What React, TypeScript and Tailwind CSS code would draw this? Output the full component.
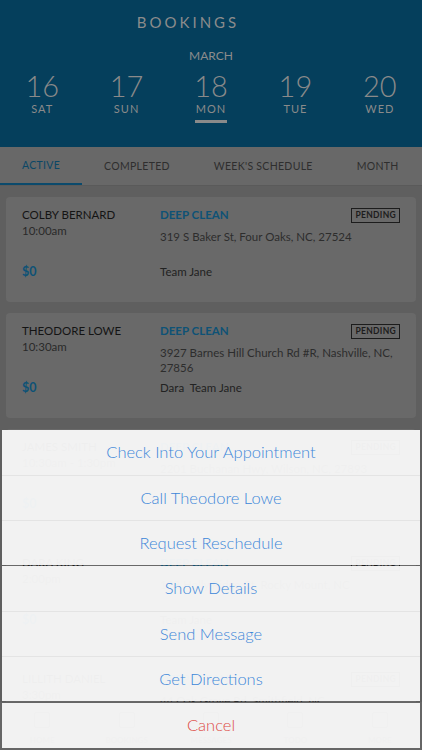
import React from "react";

type Booking = {
  name: string;
  time: string;
  address: string;
  team: string;
};

const days = [
  { num: "16", label: "SAT" },
  { num: "17", label: "SUN" },
  { num: "18", label: "MON", active: true },
  { num: "19", label: "TUE" },
  { num: "20", label: "WED" },
];

const tabs = ["ACTIVE", "COMPLETED", "WEEK'S SCHEDULE", "MONTH"];

const bookings: Booking[] = [
  { name: "COLBY BERNARD", time: "10:00am", address: "319 S Baker St, Four Oaks, NC, 27524", team: "Team Jane" },
  { name: "THEODORE LOWE", time: "10:30am", address: "3927 Barnes Hill Church Rd #R, Nashville, NC, 27856", team: "Dara  Team Jane" },
  { name: "JAMES SMITH", time: "10:30am - 1:30pm", address: "2201 Buchanan Hwy, Wilson, NC, 27893", team: "" },
  { name: "DARA KING", time: "2:00pm", address: "108 Holly Ridge Ct, Rocky Mount, NC", team: "Team Jane" },
  { name: "LILLITH DANIEL", time: "3:30pm", address: "44 Oak Grove Rd, Smithfield, NC", team: "" },
];

const nav = ["HOME", "BOOKINGS", "MESSAGES", "TODO", "MORE"];

function BookingCard({ b }: { b: Booking }) {
  return (
    <div className="rounded-[4px] bg-[#696969] pl-[16px] pr-[16px] pt-[10px] pb-[23px]">
      <div className="flex">
        <div className="w-[138px] shrink-0">
          <div className="text-[11.5px] leading-[16px] text-[#141414]">{b.name}</div>
          <div className="text-[11.5px] leading-[16px] text-[#2a2a2a]">{b.time}</div>
        </div>
        <div className="flex-1">
          <div className="flex h-[16px] items-center justify-between">
            <span className="text-[11.5px] font-bold text-[#0e5276]">DEEP CLEAN</span>
            <span className="border border-[#1c1c1c] px-[3px] text-[8.5px] font-bold leading-[13px] tracking-[0.3px] text-[#1c1c1c]">
              PENDING
            </span>
          </div>
          <div className="mt-[6px] min-h-[30px] text-[11.5px] leading-[15px] text-[#2d2d2d]">{b.address}</div>
        </div>
      </div>
      <div className="mt-[5px] flex items-center">
        <div className="w-[138px] shrink-0 text-[12.5px] font-bold leading-[15px] text-[#0e5276]">$0</div>
        <div className="text-[11.5px] leading-[15px] whitespace-pre text-[#222]">{b.team}</div>
      </div>
    </div>
  );
}

function SheetGroup({ items, danger }: { items: string[]; danger?: boolean }) {
  return (
    <div className="flex flex-col bg-[#f8f8f8]/[0.96]">
      {items.map((item, i) => (
        <div
          key={item}
          className={
            "flex h-[45px] items-center justify-center text-[16.5px] font-light " +
            (i > 0 ? "border-t border-[#e4e4e4] " : "") +
            (danger ? "text-[#de4c45]" : "text-[#3d87d9]")
          }
        >
          {item}
        </div>
      ))}
    </div>
  );
}

export default function App() {
  return (
    <div className="relative flex h-[750px] w-[422px] flex-col overflow-hidden bg-[#5f5f5f] font-['Lato','Noto_Sans',sans-serif]">
      <header className="flex h-[147px] shrink-0 flex-col items-center bg-[#053f5c] pt-[12px]">
        <div className="pr-[46px] text-[15px] leading-[20px] tracking-[3px] text-[#8c8c8c]">BOOKINGS</div>
        <div className="mt-[16px] text-[12px] leading-[16px] text-[#8c8c8c]">MARCH</div>
        <div className="mt-[6px] grid w-full grid-cols-5">
          {days.map((d) => (
            <div key={d.num} className="flex flex-col items-center">
              <div className="text-[29px] font-light leading-[32px] text-[#8a8a8a]">{d.num}</div>
              <div className="text-[11px] leading-[14px] tracking-[1px] text-[#8a8a8a]">{d.label}</div>
              {d.active && <div className="mt-[4px] h-[3px] w-[32px] bg-[#8a8a8a]" />}
            </div>
          ))}
        </div>
      </header>

      <nav className="flex h-[39px] shrink-0 border-b border-[#5a5a5a] bg-[#686868]">
        {tabs.map((t, i) => (
          <div
            key={t}
            className={
              "flex shrink-0 items-center whitespace-nowrap px-[22px] pt-[2px] text-[10.5px] tracking-[0.3px] " +
              (i === 0 ? "border-b-2 border-[#0b4a6c] text-[#0b4766]" : "text-[#2e2e2e]")
            }
          >
            {t}
          </div>
        ))}
      </nav>

      <main className="flex flex-1 flex-col gap-[11px] overflow-hidden px-[6px] pt-[11px]">
        {bookings.map((b) => (
          <BookingCard key={b.name} b={b} />
        ))}
      </main>

      <div className="absolute bottom-0 left-0 right-0 flex h-[48px] bg-[#666666]">
        {nav.map((n) => (
          <div key={n} className="flex flex-1 flex-col items-center justify-end pb-[4px]">
            <div className="mb-[6px] h-[16px] w-[16px] rounded-[2px] border border-[#3a3a3a]" />
            <div className="text-[8px] font-bold text-[#3a3a3a]">{n}</div>
          </div>
        ))}
      </div>

      <div className="absolute bottom-[2px] left-[2px] right-[2px] flex flex-col gap-[2px]">
        <div className="flex flex-col gap-[1px]">
          <SheetGroup items={["Check Into Your Appointment", "Call Theodore Lowe", "Request Reschedule"]} />
          <SheetGroup items={["Show Details", "Send Message", "Get Directions"]} />
        </div>
        <SheetGroup items={["Cancel"]} danger />
      </div>
    </div>
  );
}
